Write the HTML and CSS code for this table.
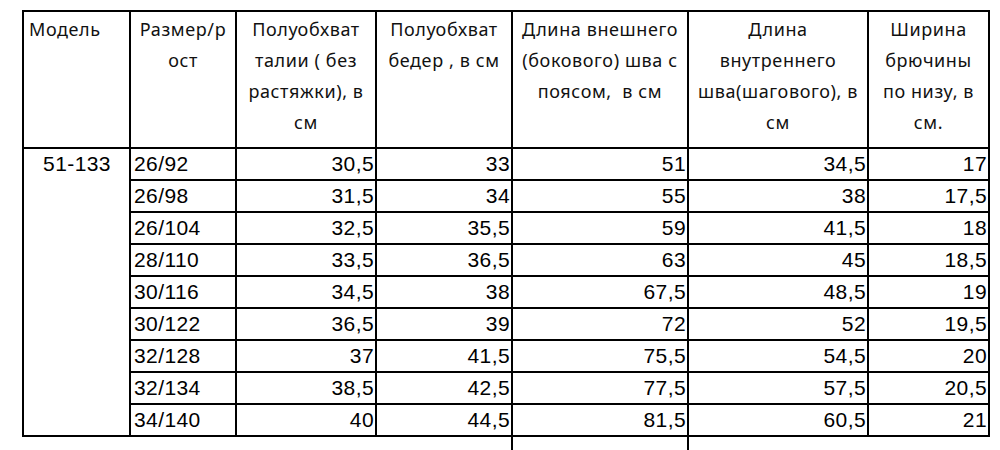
FILE: index.html
```html
<!DOCTYPE html>
<html lang="ru">
<head>
<meta charset="utf-8">
<title>Размеры</title>
<link rel="stylesheet" href="styles.css">
</head>
<body>
<table class="sizes">
  <colgroup>
    <col class="c1"><col class="c2"><col class="c3"><col class="c4"><col class="c5"><col class="c6"><col class="c7">
  </colgroup>
  <thead>
    <tr>
      <th class="left">Модель</th>
      <th>Размер/р<br>ост</th>
      <th>Полуобхват<br>талии ( без<br>растяжки), в<br>см</th>
      <th>Полуобхват<br>бедер , в см</th>
      <th>Длина внешнего<br>(бокового) шва с<br>поясом,&nbsp; в см</th>
      <th>Длина<br>внутреннего<br>шва(шагового), в<br>см</th>
      <th>Ширина<br>брючины<br>по низу, в<br>см.</th>
    </tr>
  </thead>
  <tbody>
    <tr><td class="model" rowspan="9">51-133</td><td class="size">26/92</td><td>30,5</td><td>33</td><td>51</td><td>34,5</td><td>17</td></tr>
    <tr><td class="size">26/98</td><td>31,5</td><td>34</td><td>55</td><td>38</td><td>17,5</td></tr>
    <tr><td class="size">26/104</td><td>32,5</td><td>35,5</td><td>59</td><td>41,5</td><td>18</td></tr>
    <tr><td class="size">28/110</td><td>33,5</td><td>36,5</td><td>63</td><td>45</td><td>18,5</td></tr>
    <tr><td class="size">30/116</td><td>34,5</td><td>38</td><td>67,5</td><td>48,5</td><td>19</td></tr>
    <tr><td class="size">30/122</td><td>36,5</td><td>39</td><td>72</td><td>52</td><td>19,5</td></tr>
    <tr><td class="size">32/128</td><td>37</td><td>41,5</td><td>75,5</td><td>54,5</td><td>20</td></tr>
    <tr><td class="size">32/134</td><td>38,5</td><td>42,5</td><td>77,5</td><td>57,5</td><td>20,5</td></tr>
    <tr><td class="size">34/140</td><td>40</td><td>44,5</td><td>81,5</td><td>60,5</td><td>21</td></tr>
    <tr class="tail"><td></td><td></td><td></td><td></td><td class="mark"></td><td class="mark"></td><td></td></tr>
  </tbody>
</table>
</body>
</html>
```

FILE: styles.css
```css
html, body {
  margin: 0;
  padding: 0;
  background: #ffffff;
}

body {
  padding: 10px 0 0 22px;
  overflow: hidden;
  height: 450px;
  box-sizing: border-box;
}

.sizes {
  border-collapse: collapse;
  table-layout: fixed;
  width: 966px;
  color: #000000;
}

.c1 { width: 107px; }
.c2 { width: 106px; }
.c3 { width: 140px; }
.c4 { width: 136px; }
.c5 { width: 176px; }
.c6 { width: 180px; }
.c7 { width: 121px; }

.sizes th,
.sizes td {
  border: 2px solid #000000;
}

.sizes th {
  font-family: "Noto Sans", "Open Sans", sans-serif;
  font-weight: normal;
  font-size: 18px;
  line-height: 31px;
  letter-spacing: 0.6px;
  color: #111111;
  text-align: center;
  vertical-align: top;
  padding: 2px 0 4px;
  height: 137px;
  box-sizing: border-box;
  white-space: nowrap;
}

.sizes th.left {
  text-align: left;
  padding-left: 5px;
}

.sizes td {
  font-family: "Liberation Sans", Arial, sans-serif;
  font-size: 21px;
  letter-spacing: 0.4px;
  line-height: 30px;
  height: 30px;
  padding: 0 1px 0 2px;
  text-align: right;
  white-space: nowrap;
}

.sizes td.size {
  text-align: left;
  padding-left: 3px;
}

.sizes td.model {
  text-align: center;
  vertical-align: top;
}

.sizes tr.tail td {
  border: none;
  height: 20px;
}

.sizes tr.tail td.mark {
  border-left: 2px solid #000000;
}
```
